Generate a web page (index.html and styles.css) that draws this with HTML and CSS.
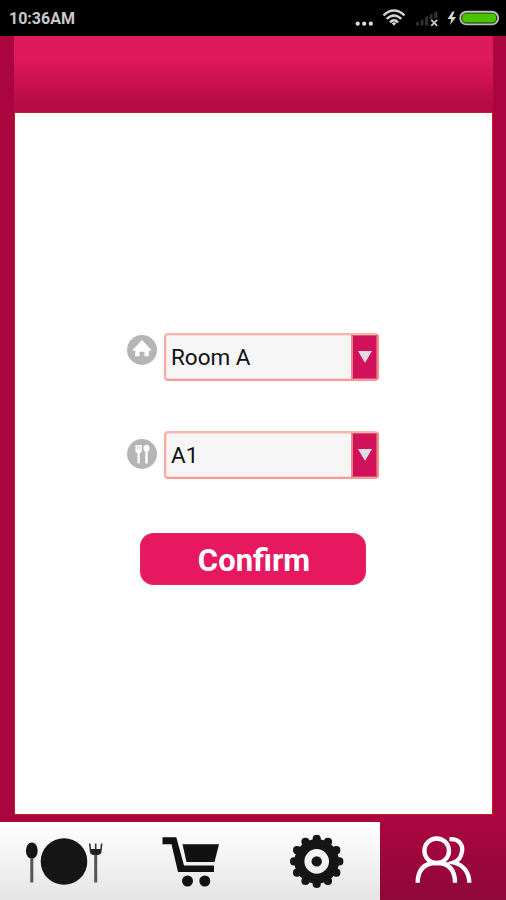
FILE: index.html
```html
<!DOCTYPE html>
<html lang="en">
<head>
<meta charset="utf-8">
<title>Table selection</title>
<link rel="stylesheet" href="styles.css">
</head>
<body>
<div class="app">
  <header class="status">
    <span class="time">10:36AM</span>
    <svg class="status-icons" width="156" height="36" viewBox="0 0 156 36">
      <g fill="#ddd"><circle cx="7.7" cy="23.7" r="2.1"/><circle cx="14.2" cy="23.7" r="2.1"/><circle cx="20.8" cy="23.7" r="2.1"/></g>
      <g fill="none" stroke="#d4d4d4" stroke-width="2.4">
        <path d="M33.5 15.3Q44 5.700 54.500 15.300M36.700 18.900Q44 12.100 51.300 18.900M40 22.300Q44 18.300 48 22.300"/>
      </g>
      <path d="M41.800 23.200Q44 21.300 46.200 23.200L44 25.800Z" fill="#ddd"/>
      <g fill="#303030"><path d="M66 25.500v-3l3-1v4zM70.500 25.500v-5l3-1.500v6.500zM75 25.500v-8l3-1.500v9.500zM79.500 19v-4l3-1.500v5.500zM84 18v-5.500l3.500-1.500v7z"/></g>
      <path d="M81.200 19.800l6 6M87.200 19.800l-6 6" stroke="#ccc" stroke-width="1.700"/>
      <path d="M102.500 11.500l-5 7.500h3.700l-1.200 6 6-8h-3.800l2.300-5.500z" fill="#d6d6d6"/>
      <rect x="110.200" y="11.700" width="38" height="12.700" rx="6.300" fill="#163300" stroke="#bbb" stroke-width="1.900"/>
      <rect x="112.200" y="13.500" width="34" height="9" rx="4" fill="#48c400"/>
    </svg>
  </header>
  <div class="banner"></div>
  <main class="content">
    <div class="field">
      <svg class="badge" width="30" height="30" viewBox="0 0 30 30">
        <circle cx="15" cy="15" r="15" fill="#b5b5b5"/>
        <path d="M15 5L25 15.500h-3.200v5.800h-4.300v-4.500h-5v4.500H8.200v-5.800H5z" fill="#fff"/>
      </svg>
      <div class="select"><span class="value">Room A</span><span class="drop"><i class="caret"></i></span></div>
    </div>
    <div class="field field-table">
      <svg class="badge" width="30" height="30" viewBox="0 0 30 30">
        <circle cx="15" cy="15" r="15" fill="#b5b5b5"/>
        <path d="M8.200 6v6q0 1.800 2 2.200V24.500h2.800V14.200q2-.4 2-2.200V6M10.500 6v4.500M12.700 6v4.500" fill="#fff" stroke="#b5b5b5" stroke-width=".5"/>
        <ellipse cx="19.500" cy="9.300" rx="3" ry="3.500" fill="#fff"/><path d="M19.500 11v13.500" stroke="#fff" stroke-width="2.500"/>
      </svg>
      <div class="select"><span class="value">A1</span><span class="drop"><i class="caret"></i></span></div>
    </div>
    <button class="confirm">Confirm</button>
  </main>
  <nav class="tabs">
    <a class="tab">
      <svg width="127" height="78" viewBox="0 0 127 78">
        <g fill="#161616"><circle cx="64" cy="39.500" r="23.300"/><ellipse cx="31.800" cy="28.700" rx="5.900" ry="8.300"/></g>
        <path d="M31.800 36v24.500M95.700 32v28.500" stroke="#555" stroke-width="3"/>
        <path d="M89.700 21.500l1 8.500q.3 2 2.300 2h5.400q2 0 2.300-2l1-8.500M95.700 21.500v10" fill="none" stroke="#333" stroke-width="1.600"/>
        <path d="M90.500 27h10.600l-.8 3.800q-.5 2-4.600 2t-4.600-2z" fill="#222"/>
      </svg>
    </a>
    <a class="tab">
      <svg width="127" height="78" viewBox="0 0 127 78">
        <path d="M35.500 15.300H49.300L57 43.500H87V50H51L44.500 22.300H35.500zM55.500 22.300H92L87.500 40H59.500z" fill="#111"/>
        <circle cx="60.500" cy="59" r="5.500" fill="#111"/><circle cx="77.800" cy="59" r="5.500" fill="#111"/>
      </svg>
    </a>
    <a class="tab">
      <svg width="126" height="78" viewBox="0 0 126 78">
        <g fill="none" stroke="#151515">
          <circle cx="62.700" cy="39.400" r="17.300" stroke-width="10"/>
          <circle class="teeth" cx="62.700" cy="39.400" r="22.600" stroke-width="8.200" pathLength="12"/>
        </g>
        <circle cx="62.700" cy="39.400" r="5.200" fill="#151515"/>
      </svg>
    </a>
    <a class="tab tab-active">
      <svg width="126" height="78" viewBox="0 0 126 78">
        <g fill="none" stroke="#fff" stroke-width="4.300">
          <circle cx="56.700" cy="28.800" r="12.300"/>
          <path d="M37.700 60.800C37.700 48 44 41 56.700 41S75 48 75 60.800M69.500 17.300C78 16.500 83.300 22 82 29.500C81.200 35 78 39 73.500 40.500C83 42.500 89.300 50 89.300 60.800"/>
        </g>
      </svg>
    </a>
  </nav>
</div>
</body>
</html>
```
FILE: styles.css
```css
* { box-sizing: border-box; }
body { margin: 0; font-family: Roboto, "Noto Sans", sans-serif; }
.app {
  width: 506px;
  height: 900px;
  display: flex;
  flex-direction: column;
  background: #aa053f;
  overflow: hidden;
}
.status {
  height: 36px;
  flex: none;
  display: flex;
  align-items: center;
  justify-content: space-between;
  padding-left: 9px;
  background: #000;
}
.time { color: #c9c9c9; font-size: 16px; font-weight: 700; line-height: 18px; padding-top: 2px; }
.status-icons { display: block; }
.banner {
  height: 76px;
  flex: none;
  margin: 0 13px 0 14px;
  background: linear-gradient(#df1a5b 0%, #df195b 30%, #b60b45 90%, #b50b42 100%);
}
.content {
  height: 703px;
  flex: none;
  margin: 0 13px 0 14px;
  border: 1px solid #c51c24;
  background: #fff;
  display: flex;
  flex-direction: column;
  align-items: flex-start;
  padding: 219px 0 0 112px;
}
.field { display: flex; height: 50px; gap: 7px; }
.badge { flex: none; margin-top: 3px; }
.field-table { margin-top: 48px; }
.field-table .badge { margin-top: 9px; }
.select {
  width: 215px;
  height: 48px;
  margin-top: 1px;
  display: flex;
  border: 2px solid;
  border-color: #fab5aa #f48588 #f6999a #faaaa5;
  border-radius: 4px;
  background: #f6f6f6;
  box-shadow: inset 0 0 1px 1px #fbdcd8;
}
.value { flex: 1; padding-left: 5px; color: #111; font-size: 22.5px; line-height: 44px; }
.drop {
  width: 26px;
  display: flex;
  align-items: center;
  justify-content: center;
  background: #d1125a;
  border: 1px solid #e04f78;
  border-left: 2px solid #ef8586;
}
.caret {
  border: 7.5px solid transparent;
  border-top: 12px solid #e2dce0;
  border-bottom: 0;
}
.confirm {
  width: 226px;
  height: 52px;
  margin: 53px 0 0 13px;
  padding: 4px 0 0 2px;
  border: 1px solid #e2285f;
  border-radius: 13px;
  background: #e7185f;
  color: #fff;
  font: 700 31px/46px Roboto, sans-serif;
}
.tabs {
  height: 78px;
  flex: none;
  margin-top: 7px;
  display: grid;
  grid-template-columns: 127px 127px 126px 126px;
  background: linear-gradient(#fff, #e5e5e5);
}
.tab svg { display: block; }
.tab-active { background: linear-gradient(#aa053f, #8e0838); }
.teeth { stroke-linecap: round; stroke-dasharray: 0 1; }
```
